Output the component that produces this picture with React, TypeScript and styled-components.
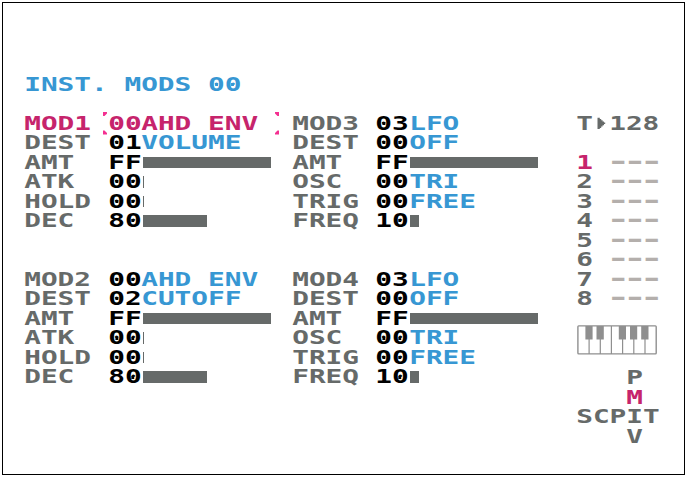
import React from "react";
import styled, { createGlobalStyle } from "styled-components";

const COL = 16.72;
const ROW = 19.53;
const FONT = 19.2;

const colors = {
  grey: "#666a69",
  blue: "#3797d3",
  magenta: "#c6246c",
  cursor: "#f43091",
  black: "#000000",
  dim: "#b4afac",
  key: "#8f8f8f",
};

type Tone = "grey" | "blue" | "magenta" | "black" | "dim";

const GlobalStyle = createGlobalStyle`
  * { box-sizing: border-box; }
  html, body { margin: 0; background: #fff; overflow: hidden; }
`;

const Screen = styled.main`
  width: 683px;
  height: 473px;
  margin: 2px;
  border: 1px solid #000;
  background: #fff;
  padding: 71.5px 0 0 22px;
  font-family: "DejaVu Sans Mono", monospace;
  font-weight: 700;
  font-size: ${FONT}px;
`;

const Cell = styled.span<{ $cols: number }>`
  display: block;
  flex: none;
  width: ${(p) => p.$cols * COL}px;
  height: ${ROW}px;
`;

const Glyphs = styled.span<{ $tone: Tone }>`
  display: block;
  width: max-content;
  line-height: ${ROW}px;
  white-space: pre;
  color: ${(p) => colors[p.$tone]};
  transform-origin: 0 50%;
  transform: translateX(-0.8px) scaleX(${COL / (FONT * 0.602051)});
`;

const Title = styled.h1`
  margin: 0 0 ${ROW}px;
  height: ${ROW}px;
  font: inherit;
`;

const Body = styled.div`
  display: grid;
  grid-template-columns: ${COL * 16}px ${COL * 17}px 100px;
`;

const Column = styled.div`
  display: flex;
  flex-direction: column;
  gap: ${ROW * 2}px;
`;

const Module = styled.section`
  display: flex;
  flex-direction: column;
`;

const Row = styled.div`
  display: flex;
  align-items: center;
  height: ${ROW}px;
`;

const Bar = styled.span<{ $value: number }>`
  flex: none;
  width: ${(p) => Math.max(1.4, p.$value / 2 + 0.6)}px;
  height: 11.6px;
  margin: 0 0 0 0.6px;
  background: ${colors.grey};
`;

const Selection = styled.span`
  position: relative;
  display: flex;
`;

const Corners = styled.svg`
  position: absolute;
  left: -5.3px;
  top: -1.9px;
  width: 176px;
  height: 23px;
`;

const Side = styled.aside`
  display: flex;
  flex-direction: column;
`;

const Tempo = styled.div`
  display: flex;
  height: ${ROW * 2}px;
`;

const Arrow = styled.svg`
  display: block;
  flex: none;
  width: ${COL}px;
  height: ${ROW}px;
`;

const Zeros = styled(Glyphs)<{ $mask: string }>`
  background: ${(p) =>
    [...p.$mask]
      .map((c, i) =>
        c === "0"
          ? `linear-gradient(currentColor, currentColor) ${(i + 0.5) * FONT * 0.602051 - 1.05}px 8.3px / 2.1px 3px no-repeat`
          : "none",
      )
      .join(", ")};
`;

const Dashes = styled(Glyphs)`
  font-family: "Liberation Sans", sans-serif;
  font-size: 20px;
  letter-spacing: 0.306px;
  transform-origin: 0 62%;
  transform: translate(0.2px, -0.4px) scale(2.4, 1.4);
`;

const Piano = styled.svg`
  display: block;
  width: 80px;
  height: 30px;
  margin: 16px 0 13.3px;
`;

const ViewMap = styled.nav`
  display: grid;
  grid-template-columns: repeat(5, ${COL}px);
  grid-auto-rows: ${ROW}px;
`;

const Above = styled.span`
  grid-column: 4;
`;

const Instrument = styled.span`
  grid-column: 1 / -1;
`;

function Text({ children, tone = "grey", cols }: { children: string; tone?: Tone; cols?: number }) {
  return (
    <Cell $cols={cols ?? children.length}>
      {children.includes("0") ? (
        <Zeros $tone={tone} $mask={children}>{children}</Zeros>
      ) : (
        <Glyphs $tone={tone}>{children}</Glyphs>
      )}
    </Cell>
  );
}

type Param = { name: string; hex: string; value?: string };

const envelope = (n: number, dest: string, value: string): Param[] => [
  { name: `MOD${n}`, hex: "00", value: "AHD ENV" },
  { name: "DEST", hex: dest, value },
  { name: "AMT", hex: "FF" },
  { name: "ATK", hex: "00" },
  { name: "HOLD", hex: "00" },
  { name: "DEC", hex: "80" },
];

const lfo = (n: number): Param[] => [
  { name: `MOD${n}`, hex: "03", value: "LFO" },
  { name: "DEST", hex: "00", value: "OFF" },
  { name: "AMT", hex: "FF" },
  { name: "OSC", hex: "00", value: "TRI" },
  { name: "TRIG", hex: "00", value: "FREE" },
  { name: "FREQ", hex: "10" },
];

function Cursor() {
  return (
    <Corners viewBox="0 0 176 23" fill={colors.cursor}>
      <path d="M0 0H4V1.5L1.5 4H0ZM172 0H176V4H174.5L172 1.5ZM0 18.5H1.5L4 21V22.5H0ZM176 18.5V22.5H172V21L174.5 18.5Z" />
    </Corners>
  );
}

function ModBlock({ params, selected = false }: { params: Param[]; selected?: boolean }) {
  return (
    <Module>
      {params.map((p, i) => {
        const active = selected && i === 0;
        return (
          <Row key={p.name}>
            <Text cols={5} tone={active ? "magenta" : "grey"}>{p.name}</Text>
            {active ? (
              <Selection>
                <Text tone="magenta">{p.hex}</Text>
                <Text tone="magenta">{p.value ?? ""}</Text>
                <Cursor />
              </Selection>
            ) : (
              <>
                <Text tone="black">{p.hex}</Text>
                {p.value ? <Text tone="blue">{p.value}</Text> : <Bar $value={parseInt(p.hex, 16)} />}
              </>
            )}
          </Row>
        );
      })}
    </Module>
  );
}

function Keyboard() {
  return (
    <Piano viewBox="0 0 80 30" fill="none" stroke={colors.key}>
      <rect x="0.9" y="0.9" width="78.3" height="28" rx="0.8" strokeWidth="1.4" />
      <path d="M12.1 14V29M23.3 14V29M34.4 1V29M45.6 14V29M56.8 14V29M68 14V29" strokeWidth="1.2" />
      <path d="M8.4 1H15.6V14.5H8.4ZM19.5 1H26.8V14.5H19.5ZM41.8 1H49V14.5H41.8ZM53 1H60.2V14.5H53ZM64.2 1H71.5V14.5H64.2Z" fill={colors.key} stroke="none" />
    </Piano>
  );
}

export default function App() {
  return (
    <>
      <GlobalStyle />
      <Screen>
        <Title>
          <Text tone="blue">INST. MODS 00</Text>
        </Title>
        <Body>
          <Column>
            <ModBlock params={envelope(1, "01", "VOLUME")} selected />
            <ModBlock params={envelope(2, "02", "CUTOFF")} />
          </Column>
          <Column>
            <ModBlock params={lfo(3)} />
            <ModBlock params={lfo(4)} />
          </Column>
          <Side>
            <Tempo>
              <Text>T</Text>
              <Arrow viewBox="0 0 16.72 19.53">
                <path d="M4.5 3.7H6.8V5H8.2V6.3H9.6V7.6H11V8.6H12.2V10H11V11.3H9.6V12.6H8.2V13.9H6.8V15H4.5Z" fill={colors.grey} />
              </Arrow>
              <Text>128</Text>
            </Tempo>
            {["1", "2", "3", "4", "5", "6", "7", "8"].map((n) => (
              <Row key={n}>
                <Text cols={2} tone={n === "1" ? "magenta" : "grey"}>{n}</Text>
                <Cell $cols={3}>
                  <Dashes $tone="dim">---</Dashes>
                </Cell>
              </Row>
            ))}
            <Keyboard />
            <ViewMap>
              <Above><Text>P</Text></Above>
              <Above><Text tone="magenta">M</Text></Above>
              <Instrument><Text>SCPIT</Text></Instrument>
              <Above><Text>V</Text></Above>
            </ViewMap>
          </Side>
        </Body>
      </Screen>
    </>
  );
}
